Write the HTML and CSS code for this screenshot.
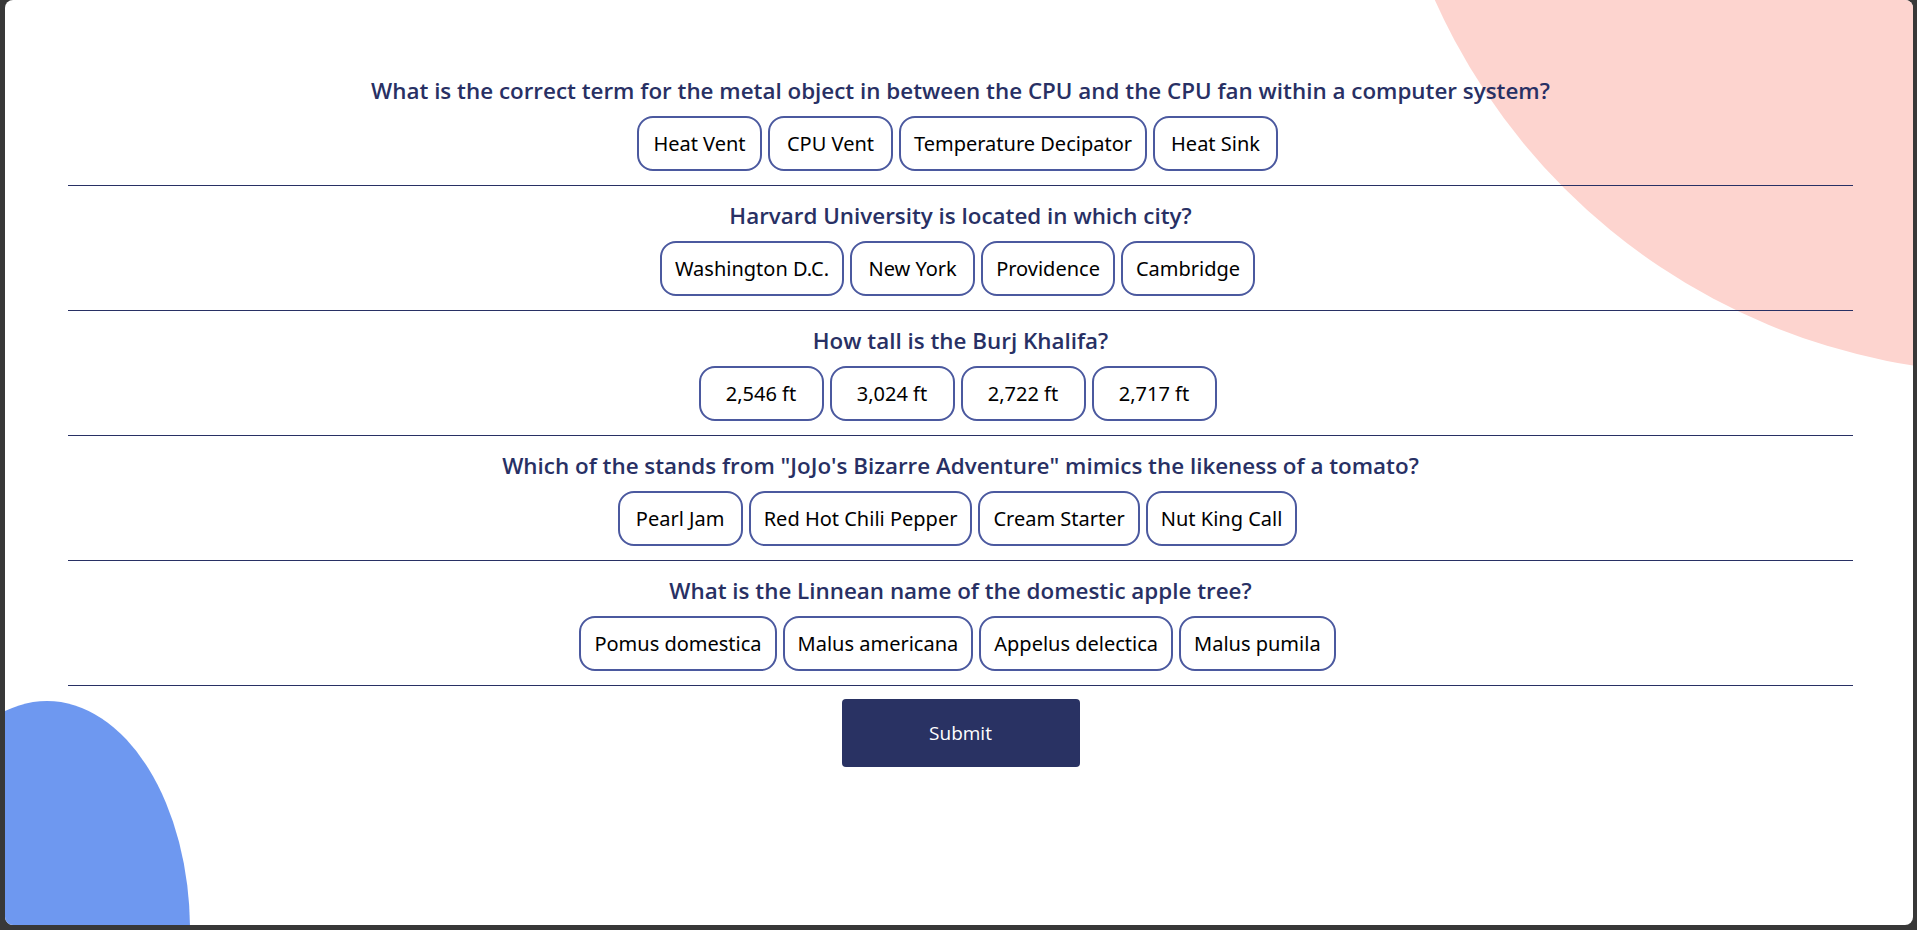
FILE: index.html
```html
<!DOCTYPE html>
<html lang="en">
<head>
<meta charset="utf-8">
<title>Quiz</title>
<link rel="stylesheet" href="styles.css">
</head>
<body>
<div class="window">
  <div class="blob blob-pink"></div>
  <div class="blob blob-blue"></div>
  <form class="quiz">
    <section class="question">
      <h2 class="q-text">What is the correct term for the metal object in between the CPU and the CPU fan within a computer system?</h2>
      <div class="options">
        <button type="button" class="option">Heat Vent</button>
        <button type="button" class="option">CPU Vent</button>
        <button type="button" class="option">Temperature Decipator</button>
        <button type="button" class="option">Heat Sink</button>
      </div>
    </section>
    <section class="question">
      <h2 class="q-text">Harvard University is located in which city?</h2>
      <div class="options">
        <button type="button" class="option">Washington D.C.</button>
        <button type="button" class="option">New York</button>
        <button type="button" class="option">Providence</button>
        <button type="button" class="option">Cambridge</button>
      </div>
    </section>
    <section class="question">
      <h2 class="q-text">How tall is the Burj Khalifa?</h2>
      <div class="options">
        <button type="button" class="option">2,546 ft</button>
        <button type="button" class="option">3,024 ft</button>
        <button type="button" class="option">2,722 ft</button>
        <button type="button" class="option">2,717 ft</button>
      </div>
    </section>
    <section class="question">
      <h2 class="q-text">Which of the stands from "JoJo's Bizarre Adventure" mimics the likeness of a tomato?</h2>
      <div class="options">
        <button type="button" class="option">Pearl Jam</button>
        <button type="button" class="option">Red Hot Chili Pepper</button>
        <button type="button" class="option">Cream Starter</button>
        <button type="button" class="option">Nut King Call</button>
      </div>
    </section>
    <section class="question">
      <h2 class="q-text">What is the Linnean name of the domestic apple tree?</h2>
      <div class="options">
        <button type="button" class="option">Pomus domestica</button>
        <button type="button" class="option">Malus americana</button>
        <button type="button" class="option">Appelus delectica</button>
        <button type="button" class="option">Malus pumila</button>
      </div>
    </section>
    <div class="actions">
      <button type="submit" class="submit">Submit</button>
    </div>
  </form>
</div>
</body>
</html>
```
FILE: styles.css
```css
* { box-sizing: border-box; }

html, body {
  margin: 0;
  padding: 0;
  background: #383838;
  height: 930px;
  overflow: hidden;
}

.window {
  position: relative;
  margin: 0 4px 0 5px;
  height: 925px;
  background: #ffffff;
  border-radius: 8px;
  overflow: hidden;
}

.blob {
  position: absolute;
  border-radius: 50%;
  z-index: 0;
}

.blob-pink {
  left: 1375px;
  top: -887px;
  width: 1260px;
  height: 1260px;
  background: #fdd4cf;
}

.blob-blue {
  left: -101px;
  top: 701px;
  width: 286px;
  height: 458px;
  background: #6e98f0;
}

.quiz {
  position: relative;
  z-index: 1;
  margin: 0 60px 0 63px;
  padding-top: 61px;
}

.question {
  padding: 14px 0 14px;
  border-bottom: 1px solid #283064;
  display: flex;
  flex-direction: column;
  align-items: center;
  gap: 9px;
}

.q-text {
  margin: 0;
  height: 32px;
  line-height: 32px;
  font-family: "Open Sans", "Noto Sans", sans-serif;
  font-weight: 600;
  font-size: 22.4px;
  color: #283064;
  text-align: center;
  white-space: nowrap;
}

.options {
  display: flex;
  justify-content: center;
}

.option {
  min-width: 125px;
  height: 55px;
  margin-right: 6px;
  padding: 0 13px;
  border: 2px solid #4b599f;
  border-radius: 16px;
  background: #ffffff;
  color: #000000;
  font-family: "Noto Sans", sans-serif;
  font-size: 20px;
  font-weight: 400;
  cursor: pointer;
}

.actions {
  display: flex;
  justify-content: center;
  padding-top: 13px;
}

.submit {
  width: 238px;
  height: 68px;
  border: none;
  border-radius: 4px;
  background: #293263;
  color: #ffffff;
  font-family: "Open Sans", "Noto Sans", sans-serif;
  font-size: 19px;
  cursor: pointer;
}
```
